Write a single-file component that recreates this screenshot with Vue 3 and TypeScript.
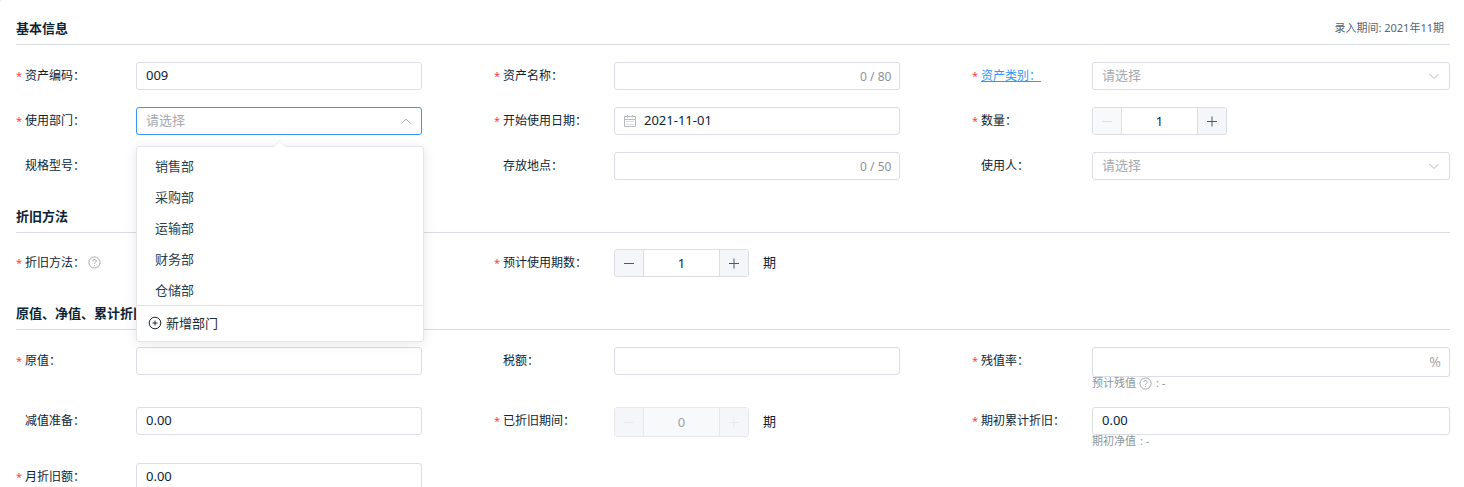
<script setup lang="ts">
import { reactive } from 'vue'

type Kind = 'text' | 'select' | 'number' | 'date'

interface Field {
  id: string
  label: string
  kind: Kind
  required?: boolean
  link?: boolean
  help?: boolean
  open?: boolean
  tall?: boolean
  disabled?: boolean
  atMin?: boolean
  unit?: string
  suffix?: string
  limit?: number
  hint?: string
  hintHelp?: boolean
}

interface Section {
  title: string
  extra?: string
  compact?: boolean
  fields: Field[]
}

const values = reactive<Record<string, string>>({
  code: '009', name: '', category: '', dept: '', startDate: '2021-11-01', qty: '1',
  spec: '', place: '', user: '', method: '', periods: '1',
  original: '', tax: '', residual: '', impairment: '0.00', used: '0',
  accumulated: '0.00', monthly: '0.00',
})

const departments = ['销售部', '采购部', '运输部', '财务部', '仓储部']

const sections: Section[] = [
  {
    title: '基本信息',
    extra: '录入期间: 2021年11期',
    fields: [
      { id: 'code', label: '资产编码', kind: 'text', required: true },
      { id: 'name', label: '资产名称', kind: 'text', required: true, limit: 80 },
      { id: 'category', label: '资产类别', kind: 'select', required: true, link: true },
      { id: 'dept', label: '使用部门', kind: 'select', required: true, open: true },
      { id: 'startDate', label: '开始使用日期', kind: 'date', required: true },
      { id: 'qty', label: '数量', kind: 'number', required: true, atMin: true },
      { id: 'spec', label: '规格型号', kind: 'text' },
      { id: 'place', label: '存放地点', kind: 'text', limit: 50 },
      { id: 'user', label: '使用人', kind: 'select' },
    ],
  },
  {
    title: '折旧方法',
    compact: true,
    fields: [
      { id: 'method', label: '折旧方法', kind: 'select', required: true, help: true },
      { id: 'periods', label: '预计使用期数', kind: 'number', required: true, unit: '期' },
    ],
  },
  {
    title: '原值、净值、累计折旧',
    fields: [
      { id: 'original', label: '原值', kind: 'text', required: true },
      { id: 'tax', label: '税额', kind: 'text' },
      { id: 'residual', label: '残值率', kind: 'text', required: true, tall: true, suffix: '%', hint: '预计残值', hintHelp: true },
      { id: 'impairment', label: '减值准备', kind: 'text' },
      { id: 'used', label: '已折旧期间', kind: 'number', required: true, tall: true, disabled: true, unit: '期' },
      { id: 'accumulated', label: '期初累计折旧', kind: 'text', required: true, hint: '期初净值' },
      { id: 'monthly', label: '月折旧额', kind: 'text', required: true },
    ],
  },
]

function step(id: string, delta: number) {
  values[id] = String(Math.max(1, Number(values[id]) + delta))
}
</script>

<template>
  <main class="page">
    <section v-for="s in sections" :key="s.title">
      <header class="head">
        <h2>{{ s.title }}</h2>
        <span v-if="s.extra" class="extra">{{ s.extra }}</span>
      </header>
      <div class="grid" :class="{ compact: s.compact }">
        <div v-for="f in s.fields" :key="f.id" class="field">
          <div class="label">
            <span class="star">{{ f.required ? '*' : '' }}</span>
            <a v-if="f.link" :id="f.id + '-label'" href="#">{{ f.label }}：</a>
            <label v-else :for="f.id">{{ f.label }}：</label>
            <svg v-if="f.help" class="help" viewBox="0 0 14 14" aria-hidden="true">
              <circle cx="7" cy="7" r="6" />
              <path d="M5.2 5.6a1.8 1.8 0 1 1 2.7 1.5c-.6.4-.9.6-.9 1.3M7 9.6v1" />
            </svg>
          </div>

          <div class="control">
            <div class="box" :class="{ tall: f.tall }">
              <template v-if="f.kind === 'number'">
                <div class="stepper" :class="{ off: f.disabled }">
                  <button type="button" aria-label="减少" :disabled="f.disabled || f.atMin" @click="step(f.id, -1)">
                    <svg viewBox="0 0 12 12"><path d="M1 6.5h10" /></svg>
                  </button>
                  <input :id="f.id" v-model="values[f.id]" type="text" :disabled="f.disabled" />
                  <button type="button" aria-label="增加" :disabled="f.disabled" @click="step(f.id, 1)">
                    <svg viewBox="0 0 12 12"><path d="M1 6.5h10M6 1.5v10" /></svg>
                  </button>
                </div>
                <span v-if="f.unit" class="unit">{{ f.unit }}</span>
              </template>

              <template v-else-if="f.kind === 'select'">
                <select
                  :id="f.id"
                  v-model="values[f.id]"
                  class="input"
                  :class="{ active: f.open, empty: !values[f.id] }"
                  :aria-labelledby="f.link ? f.id + '-label' : undefined"
                >
                  <option value="">请选择</option>
                  <template v-if="f.open">
                    <option v-for="d in departments" :key="d">{{ d }}</option>
                  </template>
                </select>
                <svg class="chevron" viewBox="0 0 12 12" aria-hidden="true">
                  <path :d="f.open ? 'M1.5 8.5 6 4l4.5 4.5' : 'M1.5 4 6 8.5 10.5 4'" />
                </svg>
                <div v-if="f.open" class="menu">
                  <ul role="listbox" aria-label="使用部门">
                    <li v-for="d in departments" :key="d" role="option" @click="values[f.id] = d">{{ d }}</li>
                  </ul>
                  <button type="button" class="add">
                    <svg viewBox="0 0 14 14" aria-hidden="true">
                      <circle cx="7" cy="7" r="5.8" />
                      <path d="M4.5 7h5M7 4.5v5" />
                    </svg>
                    新增部门
                  </button>
                </div>
              </template>

              <template v-else>
                <svg v-if="f.kind === 'date'" class="calendar" viewBox="0 0 12 12" aria-hidden="true">
                  <path d="M.5 1.5h11v10H.5zM.5 4.5h11M3.5 0v2.5M8.5 0v2.5" />
                  <path class="dots" d="M2.5 6.5h7M2.5 9.5h7" />
                </svg>
                <input :id="f.id" v-model="values[f.id]" type="text" class="input" :class="{ dated: f.kind === 'date' }" />
                <span v-if="f.limit" class="count">{{ values[f.id].length }} / {{ f.limit }}</span>
                <span v-if="f.suffix" class="suffix">{{ f.suffix }}</span>
              </template>
            </div>

            <div v-if="f.hint" class="hint">
              <span>{{ f.hint }}</span>
              <svg v-if="f.hintHelp" class="help" viewBox="0 0 14 14" aria-hidden="true">
                <circle cx="7" cy="7" r="6" />
                <path d="M5.2 5.6a1.8 1.8 0 1 1 2.7 1.5c-.6.4-.9.6-.9 1.3M7 9.6v1" />
              </svg>
              <span class="result">: -</span>
            </div>
          </div>
        </div>
      </div>
    </section>
  </main>
</template>

<style>
body {
  margin: 0;
  background: #f0f0f0;
}
</style>

<style scoped>
.page {
  box-sizing: border-box;
  height: 100vh;
  overflow-y: auto;
  scrollbar-width: none;
  padding: 9px 14px 0 16px;
  border-top-left-radius: 4px;
  background: #fff;
  color: #0b2536;
  font-family: "Noto Sans", "Noto Sans CJK SC", sans-serif;
  font-size: 12px;
}
button,
input,
select {
  box-sizing: border-box;
  margin: 0;
  font: inherit;
  font-size: 13px;
  color: inherit;
  outline: none;
}
svg {
  fill: none;
  stroke: currentColor;
}
.head {
  display: flex;
  justify-content: space-between;
  padding: 9px 6px 6px 0;
  border-bottom: 1px solid #dadce4;
  line-height: 20px;
}
h2 {
  margin: 0;
  font-size: 13px;
  font-weight: 700;
}
.extra {
  font-size: 11px;
  color: #566570;
}
.grid {
  display: grid;
  grid-template-columns: repeat(3, 1fr);
  row-gap: 17px;
  padding: 17px 0;
}
.grid.compact {
  padding-top: 16px;
}
.field {
  display: flex;
  align-items: flex-start;
}
.label {
  box-sizing: border-box;
  flex: 0 0 120px;
  display: flex;
  align-items: center;
  height: 28px;
  padding-bottom: 2px;
}
.star {
  width: 9px;
  font-size: 11px;
  color: #f5464b;
}
.label a {
  color: #3296fa;
}
.help {
  width: 13px;
  height: 13px;
  margin-left: 3px;
  color: #98a0a5;
}
.control {
  flex: 1;
  min-width: 0;
}
.box {
  position: relative;
  display: flex;
  align-items: center;
  width: 80%;
  height: 28px;
}
.field:nth-child(3n) .box {
  width: 100%;
}
.box.tall {
  height: 30px;
}
.input {
  width: 100%;
  height: 100%;
  padding: 0 9px 2px;
  border: 1px solid #dcdee6;
  border-radius: 3px;
  background: #fff;
  appearance: none;
}
.input.empty {
  color: #a6a9b0;
}
.input.active {
  border-color: #3d95f2;
}
.input.dated {
  padding-left: 29px;
}
.calendar {
  position: absolute;
  left: 10px;
  width: 12px;
  height: 12px;
  color: #b8bbc2;
}
.dots {
  stroke-dasharray: 1 1;
}
.chevron {
  position: absolute;
  right: 10px;
  width: 12px;
  height: 12px;
  color: #b4b7be;
}
.count {
  position: absolute;
  right: 9px;
  color: #8f9299;
}
.suffix {
  position: absolute;
  right: 9px;
  padding-bottom: 2px;
  font-size: 14px;
  color: #a6a9b0;
}
.stepper {
  box-sizing: border-box;
  display: flex;
  width: 135px;
  height: 100%;
  border: 1px solid #dcdee6;
  border-radius: 3px;
  overflow: hidden;
}
.stepper button {
  flex: 0 0 28px;
  display: flex;
  align-items: center;
  justify-content: center;
  padding: 0;
  border: 0;
  background: #f5f6fa;
  color: #4a5b68;
}
.stepper button svg {
  width: 12px;
  height: 12px;
}
.stepper button:disabled {
  background: #f8f9fb;
  color: #dcdee4;
}
.stepper input {
  flex: 1;
  min-width: 0;
  padding: 0;
  border: solid #dcdee6;
  border-width: 0 1px;
  background: #fff;
  text-align: center;
}
.stepper.off {
  border-color: #e6e8ec;
}
.stepper.off input {
  border-color: #e6e8ec;
  background: #f8f9fb;
  color: #9aa2a8;
}
.stepper.off button {
  background: #f5f6fa;
  color: #e8eaee;
}
.unit {
  margin-left: 14px;
  padding-bottom: 3px;
  font-size: 13px;
}
.hint {
  display: flex;
  align-items: flex-start;
  font-size: 11px;
  line-height: 11px;
  color: #8c969c;
}
.result {
  margin-left: 4px;
}
.menu {
  position: absolute;
  z-index: 2;
  top: 39px;
  left: 0;
  right: -2px;
  border: 1px solid #e4e6ec;
  border-radius: 3px;
  background: #fff;
  box-shadow: 0 2px 12px rgba(0, 0, 0, 0.1);
}
.menu::before {
  content: "";
  position: absolute;
  top: -5px;
  left: 50%;
  width: 8px;
  height: 8px;
  margin-left: -5px;
  border: solid #eceef2;
  border-width: 1px 0 0 1px;
  background: #fff;
  transform: rotate(45deg);
}
.menu ul {
  position: relative;
  height: 158px;
  box-sizing: border-box;
  margin: 0;
  padding: 4px 0 0;
  overflow: hidden;
  list-style: none;
}
.menu li {
  padding: 0 18px;
  font-size: 13px;
  line-height: 31px;
  color: #2c404c;
}
.add {
  display: flex;
  align-items: center;
  gap: 4px;
  width: 100%;
  height: 36px;
  padding: 0 11px 2px;
  border: 0;
  border-top: 1px solid #dfe1e6;
  background: none;
  color: #222a30;
}
.add svg {
  width: 14px;
  height: 14px;
}
</style>
